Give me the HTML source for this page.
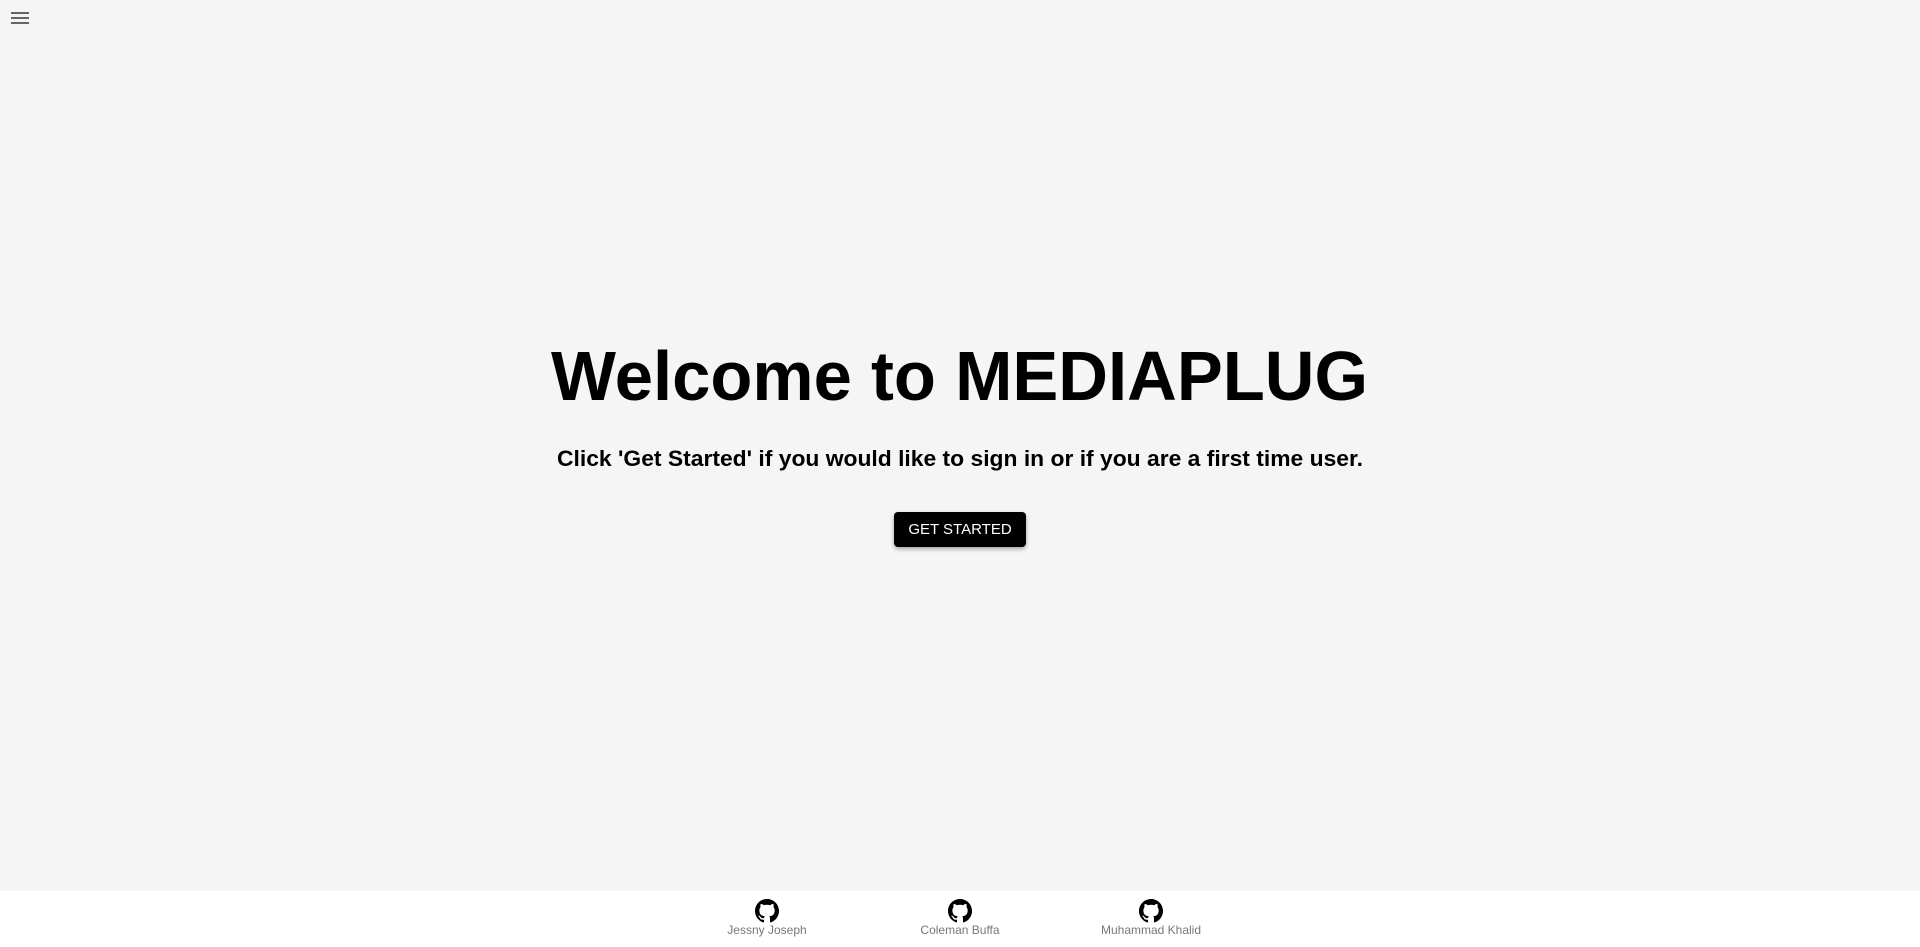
<!DOCTYPE html>
<html><head><meta charset="utf-8"><style>
html,body{margin:0;padding:0;width:1920px;height:947px;background:#f5f5f5;overflow:hidden;font-family:"Liberation Sans",sans-serif}
.hb{position:absolute;left:11px;width:18px;height:2px;background:#666}
.btn{position:absolute;left:894px;top:512px;width:132px;height:35px;background:#000;color:#fff;border-radius:4px;font-size:15px;line-height:35px;text-align:center;box-shadow:0 2px 4px rgba(0,0,0,.35)}
.foot{position:absolute;left:0;top:891px;width:1920px;height:56px;background:#fff}
.it{position:absolute;top:8px;width:160px;margin-left:-80px;text-align:center;color:#777;font-size:12px}
.it svg{display:block;margin:0 auto 0}
</style></head><body>
<div class="hb" style="top:12px"></div><div class="hb" style="top:17px"></div><div class="hb" style="top:22px"></div>
<svg width="1920" height="500" style="position:absolute;left:0;top:0">
<text x="551" y="400" textLength="817" lengthAdjust="spacingAndGlyphs" font-family="Liberation Sans" font-weight="bold" font-size="70">Welcome to MEDIAPLUG</text>
<text x="557" y="466" textLength="806" lengthAdjust="spacingAndGlyphs" font-family="Liberation Sans" font-weight="bold" font-size="22">Click 'Get Started' if you would like to sign in or if you are a first time user.</text>
</svg>
<div class="btn">GET STARTED</div>
<div class="foot">
<div class="it" style="left:767px"><svg width="24" height="24" viewBox="0 0 16 16"><path fill="#000" d="M8 0C3.58 0 0 3.58 0 8c0 3.54 2.29 6.53 5.47 7.59.4.07.55-.17.55-.38 0-.19-.01-.82-.01-1.49-2.01.37-2.53-.49-2.69-.94-.09-.23-.48-.94-.82-1.13-.28-.15-.68-.52-.01-.53.63-.01 1.08.58 1.23.82.72 1.21 1.87.87 2.33.66.07-.52.28-.87.51-1.07-1.78-.2-3.64-.89-3.64-3.95 0-.87.31-1.59.82-2.15-.08-.2-.36-1.02.08-2.12 0 0 .67-.21 2.2.82.64-.18 1.32-.27 2-.27.68 0 1.36.09 2 .27 1.53-1.04 2.2-.82 2.2-.82.44 1.1.16 1.92.08 2.12.51.56.82 1.27.82 2.15 0 3.07-1.87 3.75-3.65 3.95.29.25.54.73.54 1.48 0 1.07-.01 1.93-.01 2.2 0 .21.15.46.55.38A8.013 8.013 0 0016 8c0-4.42-3.58-8-8-8z"/></svg>Jessny Joseph</div>
<div class="it" style="left:960px"><svg width="24" height="24" viewBox="0 0 16 16"><path fill="#000" d="M8 0C3.58 0 0 3.58 0 8c0 3.540 2.29 6.53 5.47 7.59.4.07.55-.17.55-.38 0-.19-.01-.82-.01-1.49-2.01.37-2.530-.49-2.69-.94-.09-.23-.48-.94-.82-1.13-.28-.15-.68-.52-.01-.53.63-.01 1.08.58 1.23.82.72 1.21 1.87.87 2.33.66.07-.52.28-.87.51-1.07-1.78-.2-3.64-.89-3.64-3.95 0-.87.31-1.59.82-2.15-.08-.2-.36-1.02.08-2.12 0 0 .67-.21 2.2.82.64-.18 1.32-.27 2-.27.68 0 1.36.09 2 .27 1.53-1.04 2.2-.82 2.2-.82.44 1.1.16 1.92.08 2.12.51.56.82 1.27.82 2.15 0 3.07-1.87 3.75-3.65 3.95.29.25.54.73.54 1.48 0 1.07-.01 1.93-.01 2.2 0 .21.15.46.55.38A8.013 8.013 0 0016 8c0-4.42-3.58-8-8-8z"/></svg>Coleman Buffa</div>
<div class="it" style="left:1151px"><svg width="24" height="24" viewBox="0 0 16 16"><path fill="#000" d="M8 0C3.58 0 0 3.58 0 8c0 3.54 2.29 6.53 5.47 7.59.4.07.55-.17.55-.38 0-.19-.01-.82-.01-1.49-2.01.37-2.53-.49-2.69-.94-.09-.23-.48-.94-.82-1.13-.28-.15-.68-.52-.01-.53.63-.01 1.08.58 1.23.82.72 1.21 1.87.87 2.33.66.07-.52.28-.87.51-1.07-1.78-.2-3.64-.89-3.64-3.95 0-.87.31-1.59.82-2.15-.08-.2-.36-1.02.08-2.12 0 0 .67-.21 2.2.82.64-.18 1.32-.27 2-.27.68 0 1.36.09 2 .27 1.53-1.04 2.2-.82 2.2-.82.44 1.1.16 1.92.08 2.12.51.56.82 1.27.82 2.15 0 3.07-1.87 3.75-3.65 3.95.29.25.54.73.54 1.48 0 1.07-.01 1.93-.01 2.2 0 .21.15.46.55.38A8.013 8.013 0 0016 8c0-4.42-3.58-8-8-8z"/></svg>Muhammad Khalid</div>
</div>
</body></html>
